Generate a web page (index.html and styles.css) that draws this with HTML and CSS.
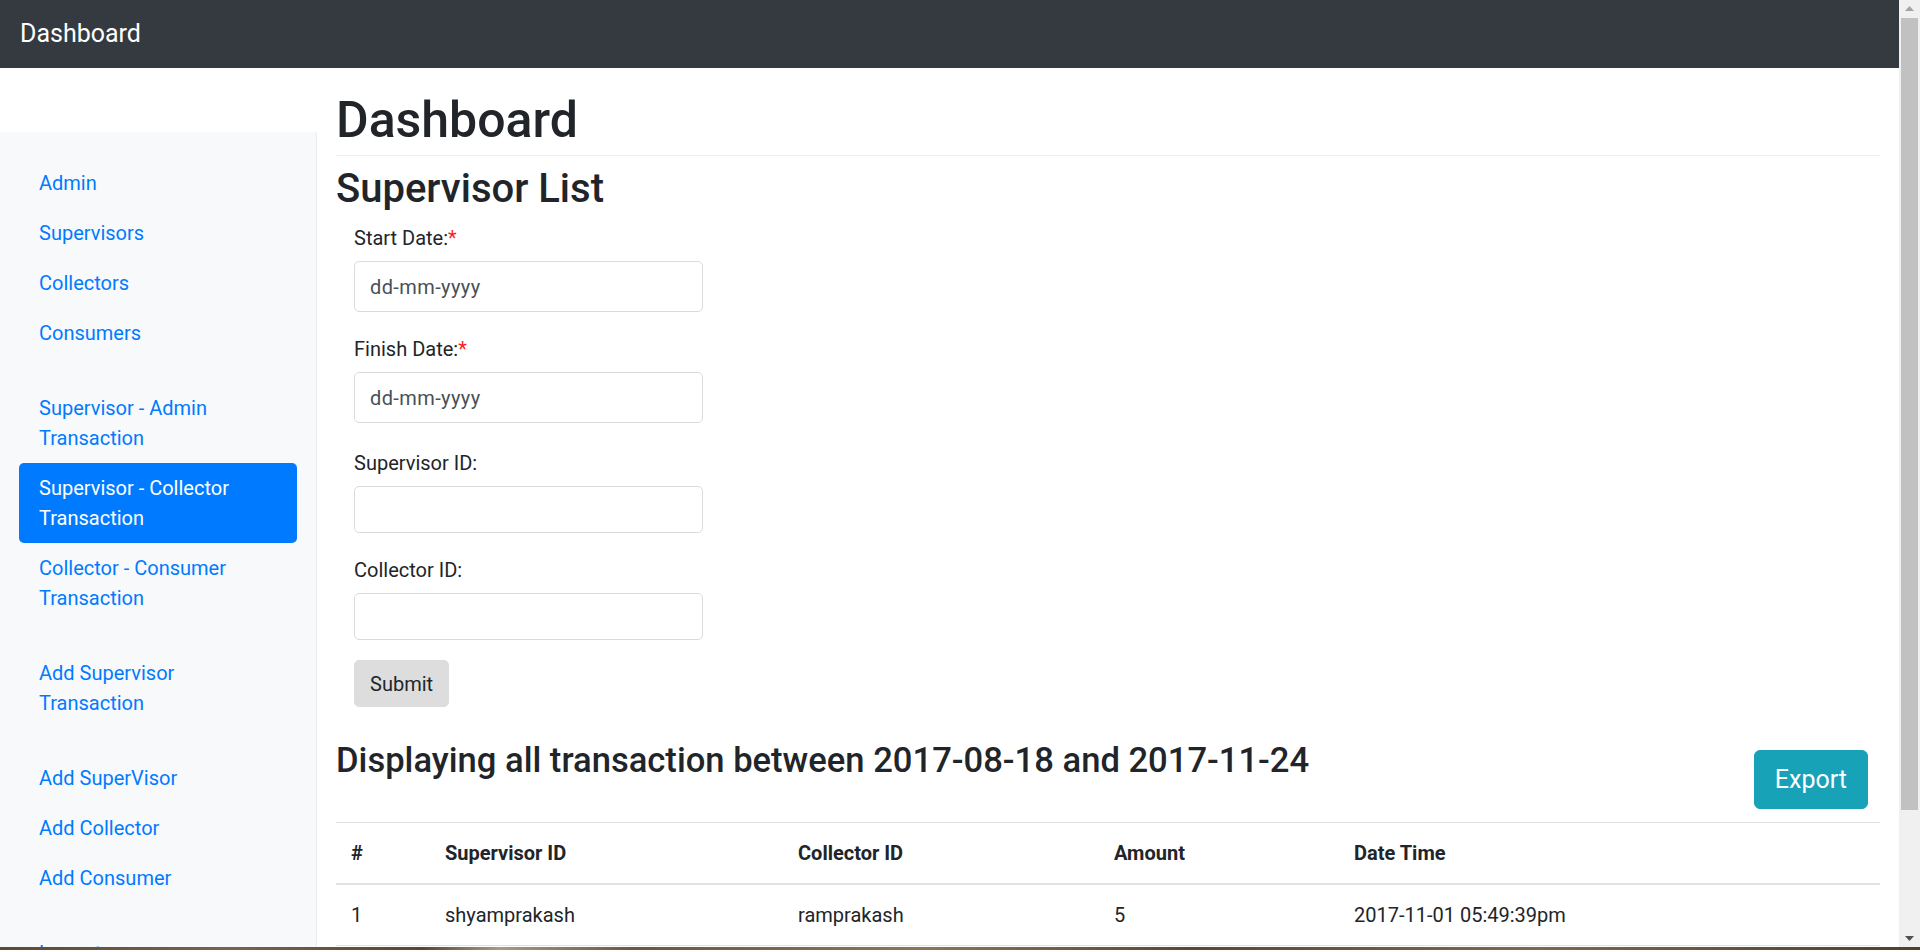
FILE: index.html
```html
<!DOCTYPE html>
<html lang="en">
<head>
<meta charset="utf-8">
<title>Dashboard</title>
<link rel="stylesheet" href="styles.css">
</head>
<body>
<div class="screen">
  <div class="window">
    <div class="page">
      <header class="navbar"><a class="brand" href="#">Dashboard</a></header>
      <div class="layout">
        <aside class="sidebar">
          <nav class="sidebar-panel">
            <ul class="nav">
              <li><a class="nav-link" href="#">Admin</a></li>
              <li><a class="nav-link" href="#">Supervisors</a></li>
              <li><a class="nav-link" href="#">Collectors</a></li>
              <li><a class="nav-link" href="#">Consumers</a></li>
            </ul>
            <ul class="nav">
              <li><a class="nav-link" href="#">Supervisor - Admin<br>Transaction</a></li>
              <li><a class="nav-link active" href="#">Supervisor - Collector<br>Transaction</a></li>
              <li><a class="nav-link" href="#">Collector - Consumer<br>Transaction</a></li>
            </ul>
            <ul class="nav">
              <li><a class="nav-link" href="#">Add Supervisor<br>Transaction</a></li>
            </ul>
            <ul class="nav">
              <li><a class="nav-link" href="#">Add SuperVisor</a></li>
              <li><a class="nav-link" href="#">Add Collector</a></li>
              <li><a class="nav-link" href="#">Add Consumer</a></li>
            </ul>
            <ul class="nav">
              <li><a class="nav-link" href="#">Logout</a></li>
            </ul>
          </nav>
        </aside>
        <main class="main">
          <h1 class="title">Dashboard</h1>
          <h2 class="subtitle">Supervisor List</h2>
          <form class="filter">
            <div class="group">
              <label class="label">Start Date:<span class="req">*</span></label>
              <input class="field field-date" type="text" placeholder="dd-mm-yyyy">
            </div>
            <div class="group group-wide">
              <label class="label">Finish Date:<span class="req">*</span></label>
              <input class="field field-date" type="text" placeholder="dd-mm-yyyy">
            </div>
            <div class="group">
              <label class="label">Supervisor ID:</label>
              <input class="field" type="text">
            </div>
            <div class="group">
              <label class="label">Collector ID:</label>
              <input class="field" type="text">
            </div>
            <button class="btn-submit" type="button">Submit</button>
          </form>
          <div class="result-head">
            <h3 class="result-title">Displaying all transaction between 2017-08-18 and 2017-11-24</h3>
            <button class="btn-export" type="button">Export</button>
          </div>
          <table class="table">
            <colgroup>
              <col class="col-num"><col class="col-sup"><col class="col-col"><col class="col-amt"><col>
            </colgroup>
            <thead>
              <tr><th>#</th><th>Supervisor ID</th><th>Collector ID</th><th>Amount</th><th>Date Time</th></tr>
            </thead>
            <tbody>
              <tr><td>1</td><td>shyamprakash</td><td>ramprakash</td><td>5</td><td>2017-11-01 05:49:39pm</td></tr>
            </tbody>
          </table>
        </main>
      </div>
    </div>
    <div class="scrollbar">
      <div class="sb-btn">
        <svg width="9" height="5" viewBox="0 0 9 5"><path d="M0 5 L4.5 0 L9 5 Z" fill="#a3a3a3"/></svg>
      </div>
      <div class="sb-thumb"></div>
      <div class="sb-track"></div>
      <div class="sb-btn">
        <svg width="9" height="5" viewBox="0 0 9 5"><path d="M0 0 L9 0 L4.5 5 Z" fill="#505050"/></svg>
      </div>
    </div>
  </div>
  <div class="wallpaper"></div>
</div>
</body>
</html>
```
FILE: styles.css
```css
* { box-sizing: border-box; }
html, body { margin: 0; height: 100%; overflow: hidden; }
body {
  font-family: Roboto, "Liberation Sans", sans-serif;
  font-size: 20px;
  line-height: 30px;
  color: #212529;
  background: #fff;
}
.screen { height: 950px; display: flex; flex-direction: column; }
.window { height: 947px; flex: none; display: flex; overflow: hidden; }
.page { width: 1899px; flex: none; display: flex; flex-direction: column; overflow: hidden; }

.navbar {
  height: 68px; flex: none;
  background: #343a40;
  display: flex; align-items: center;
  padding: 0 20px;
}
.brand { color: #fff; font-size: 25px; line-height: 37.5px; text-decoration: none; }

.layout { flex: 1; display: flex; min-height: 0; }
.sidebar { width: 317px; flex: none; padding-top: 64px; display: flex; flex-direction: column; }
.sidebar-panel {
  flex: 1;
  background: #f8f9fa;
  border-right: 1px solid #eee;
  padding: 26px 19px 0;
  overflow: hidden;
}
.nav { list-style: none; margin: 0 0 25px; padding: 0; }
.nav-link {
  display: block;
  padding: 10px 20px;
  color: #007bff;
  text-decoration: none;
  border-radius: 5px;
}
.nav-link.active { background: #007bff; color: #fff; }

.main { flex: 1; min-width: 0; padding: 22px 19px 0; }
.title {
  font-size: 50px; font-weight: 500; line-height: 60px;
  margin: 0 0 9px; padding-bottom: 5px;
  border-bottom: 1px solid #eee;
}
.subtitle { font-size: 40px; font-weight: 500; line-height: 48px; margin: 0 0 8px; }

.filter { padding-left: 18px; }
.group { margin-bottom: 20px; }
.group-wide { margin-bottom: 23px; }
.label { display: block; padding-top: 2px; margin-bottom: 8px; }
.req { color: #ff1a1a; }
.field {
  display: block;
  width: 349px; height: 47px;
  padding: 0 15px;
  border: 1px solid #d9dcdf;
  border-radius: 5px;
  font: inherit;
  color: #495057;
  background: #fff;
}
.field-date { height: 51px; letter-spacing: 0.4px; }
.field::placeholder { color: #495057; opacity: 1; }
.btn-submit {
  height: 47px;
  padding: 0 15px;
  border: 1px solid #dddddd;
  background: #dddddd;
  border-radius: 5px;
  font: inherit;
  color: #212529;
}

.result-head {
  display: flex; justify-content: space-between; align-items: flex-start;
  margin-top: 30px;
}
.result-title { font-size: 34.6px; font-weight: 500; line-height: 42px; margin: 0; padding-top: 2px; }
.btn-export {
  height: 59px;
  margin: 13px 12px 13px 0;
  padding: 0 20px;
  font-family: inherit;
  font-size: 25px;
  color: #fff;
  background: #17a2b8;
  border: 1px solid #17a2b8;
  border-radius: 6px;
}

.table { width: 100%; border-collapse: collapse; table-layout: fixed; }
.col-num { width: 94px; }
.col-sup { width: 353px; }
.col-col { width: 316px; }
.col-amt { width: 240px; }
.table th, .table td {
  padding: 15px;
  text-align: left;
  line-height: 30px;
  border-top: 1px solid #dee2e6;
  border-bottom: 1px solid #dee2e6;
  white-space: nowrap;
}
.table th { font-weight: 700; vertical-align: bottom; border-bottom: 2px solid #dee2e6; }

.scrollbar {
  width: 21px; flex: none;
  background: #f0f0f0;
  display: flex; flex-direction: column; align-items: center;
}
.sb-btn { height: 17px; flex: none; display: flex; align-items: center; justify-content: center; }
.sb-thumb { width: 17px; height: 792px; flex: none; background: #c1c1c1; margin-top: 1px; }
.sb-track { flex: 1; }

.wallpaper {
  height: 3px; flex: none;
  background: linear-gradient(90deg, #5d4a33 0%, #7a6447 12%, #5a4630 22%, #a89a86 26%, #6b5840 33%, #8c7658 48%, #5c4832 62%, #7d6a4e 80%, #4f3f2c 100%);
}
```
